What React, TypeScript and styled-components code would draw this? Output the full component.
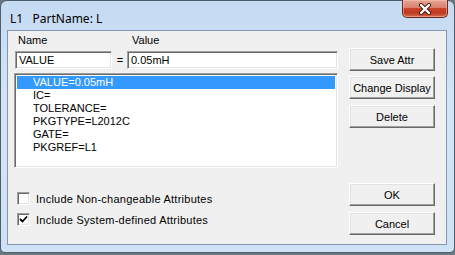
import styled, { createGlobalStyle } from 'styled-components'

const Global = createGlobalStyle`
  html, body { margin: 0; padding: 0; background: #6d7780; overflow: hidden; }
  #root { width: 455px; height: 255px; }
`

const Window = styled.div`
  width: 455px;
  height: 253px;
  box-sizing: border-box;
  display: flex;
  flex-direction: column;
  border: 1px solid #4f5d6c;
  border-radius: 7px 7px 5px 5px;
  background: linear-gradient(180deg, #c5dbf2 0%, #d3e4f6 40%, #cfe1f5 100%);
  padding: 0 7px 7px 6px;
  font-family: "Liberation Sans", Arial, sans-serif;
  font-size: 11px;
  color: #000;
`

const TitleBar = styled.div`
  height: 29px;
  display: flex;
  align-items: flex-start;
  justify-content: space-between;
`

const Title = styled.div`
  font-family: "Noto Sans", "Open Sans", sans-serif;
  font-size: 12px;
  margin: 9px 0 0 3px;
  white-space: pre;
`

const CloseButton = styled.div`
  width: 46px;
  height: 18px;
  margin: -1px -1px 0 0;
  box-sizing: border-box;
  border: 1px solid #6b2a1f;
  border-top: none;
  border-radius: 0 0 5px 5px;
  background: linear-gradient(180deg, #e6a594 0%, #d9806b 45%, #c8442b 50%, #c0391f 75%, #d86b4f 100%);
  box-shadow: inset 0 0 0 1px rgba(255, 210, 200, 0.45);
  display: flex;
  align-items: center;
  justify-content: center;
`

const Client = styled.div`
  flex: 1;
  box-sizing: border-box;
  border: 1px solid #8398b0;
  background: #f0f0f0;
  display: flex;
  padding: 0 0 0 6px;
`

const LeftColumn = styled.div`
  width: 324px;
  display: flex;
  flex-direction: column;
`

const RightColumn = styled.div`
  margin-left: 11px;
  padding-top: 17px;
  width: 86px;
  display: flex;
  flex-direction: column;
`

const LabelRow = styled.div`
  display: flex;
  height: 13px;
  margin-top: 3px;
`

const FieldLabel = styled.span<{ $width: number; $indent?: number }>`
  width: ${p => p.$width}px;
  padding-left: ${p => p.$indent ?? 0}px;
`

const InputRow = styled.div`
  display: flex;
  align-items: center;
  margin-top: 4px;
  padding-left: 1px;
`

const Sunken = styled.div`
  box-sizing: border-box;
  background: #fff;
  border: 1px solid;
  border-color: #a0a0a0 #fff #fff #a0a0a0;
  box-shadow: inset 1px 1px 0 #696969, inset -1px -1px 0 #e3e3e3;
`

const TextBox = styled(Sunken)<{ $width: number }>`
  width: ${p => p.$width}px;
  height: 18px;
  padding: 2px 0 0 3px;
  white-space: nowrap;
`

const Equals = styled.span`
  width: 14px;
  text-align: center;
  padding-left: 1px;
`

const ListBox = styled(Sunken)`
  margin-top: 4px;
  height: 95px;
  padding: 2px;
`

const ListItem = styled.div<{ $selected?: boolean }>`
  height: 13px;
  line-height: 13px;
  padding-left: 16px;
  white-space: nowrap;
  color: ${p => (p.$selected ? '#fff' : '#000')};
  background: ${p => (p.$selected ? '#3399ff' : 'transparent')};
`

const Options = styled.div`
  margin-top: 24px;
  display: flex;
  flex-direction: column;
  gap: 8px;
  padding-left: 3px;
`

const CheckRow = styled.label`
  display: flex;
  align-items: center;
  height: 13px;
  gap: 6px;
  letter-spacing: 0.25px;
`

const CheckBox = styled(Sunken)`
  width: 13px;
  height: 13px;
  display: flex;
  align-items: center;
  justify-content: center;
`

const Button = styled.div<{ $gap?: number }>`
  height: 23px;
  margin-top: ${p => p.$gap ?? 0}px;
  box-sizing: border-box;
  border: 1px solid;
  border-color: #fff #696969 #696969 #fff;
  box-shadow: inset -1px -1px 0 #a0a0a0, inset 1px 1px 0 #e3e3e3;
  background: #f0f0f0;
  display: flex;
  align-items: center;
  justify-content: center;
  white-space: nowrap;
`

function CloseGlyph() {
  return (
    <svg width="14" height="12" viewBox="0 0 14 12">
      <path d="M3 2 L11 10 M11 2 L3 10" stroke="#4a1a12" strokeWidth="4.2" strokeLinecap="round" />
      <path d="M3 2 L11 10 M11 2 L3 10" stroke="#fff" strokeWidth="2.4" strokeLinecap="round" />
    </svg>
  )
}

function CheckMark() {
  return (
    <svg width="9" height="9" viewBox="0 0 9 9">
      <path d="M1 4 L3.5 6.5 L8 1.5" stroke="#000" strokeWidth="1.8" fill="none" />
    </svg>
  )
}

const items = ['VALUE=0.05mH', 'IC=', 'TOLERANCE=', 'PKGTYPE=L2012C', 'GATE=', 'PKGREF=L1']

export default function App() {
  return (
    <>
      <Global />
      <Window>
        <TitleBar>
          <Title>{'L1   PartName: L'}</Title>
          <CloseButton>
            <CloseGlyph />
          </CloseButton>
        </TitleBar>
        <Client>
          <LeftColumn>
            <LabelRow>
              <FieldLabel $width={114} $indent={4}>Name</FieldLabel>
              <FieldLabel $width={60}>Value</FieldLabel>
            </LabelRow>
            <InputRow>
              <TextBox $width={97}>VALUE</TextBox>
              <Equals>=</Equals>
              <TextBox $width={211}>0.05mH</TextBox>
            </InputRow>
            <ListBox>
              {items.map((t, i) => (
                <ListItem key={t} $selected={i === 0}>{t}</ListItem>
              ))}
            </ListBox>
            <Options>
              <CheckRow>
                <CheckBox />
                Include Non-changeable Attributes
              </CheckRow>
              <CheckRow>
                <CheckBox>
                  <CheckMark />
                </CheckBox>
                Include System-defined Attributes
              </CheckRow>
            </Options>
          </LeftColumn>
          <RightColumn>
            <Button>Save Attr</Button>
            <Button $gap={5}>Change Display</Button>
            <Button $gap={6}>Delete</Button>
            <Button $gap={55}>OK</Button>
            <Button $gap={6}>Cancel</Button>
          </RightColumn>
        </Client>
      </Window>
    </>
  )
}
